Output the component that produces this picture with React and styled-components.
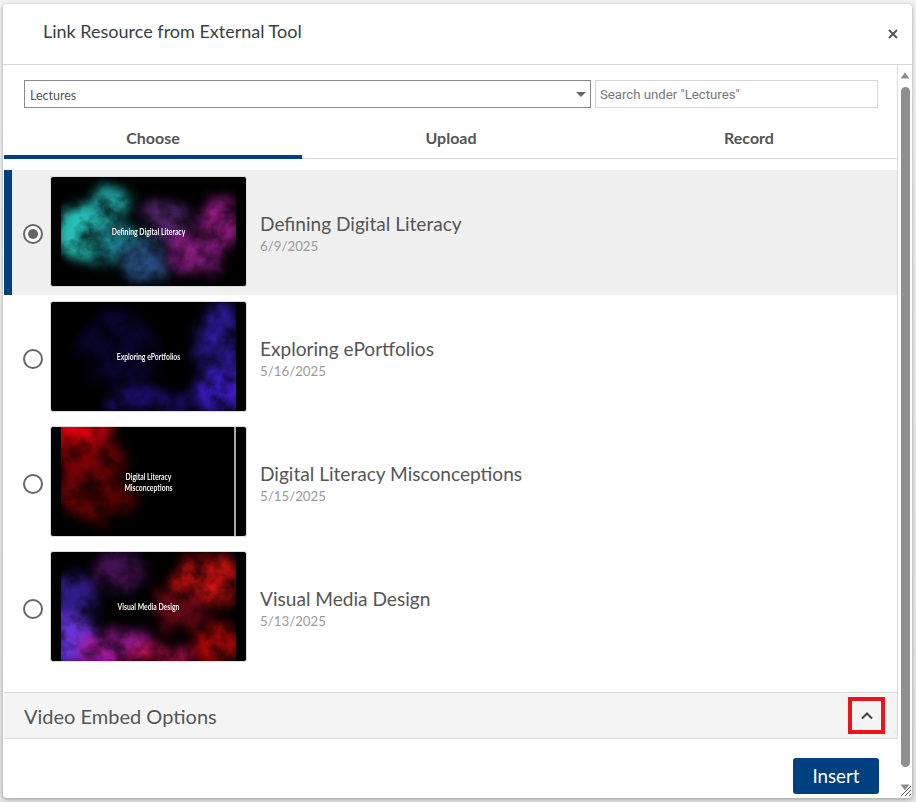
import React from "react";
import styled, { createGlobalStyle } from "styled-components";

const GlobalStyle = createGlobalStyle`
  html, body { margin: 0; padding: 0; height: 100%; background: #e9e9e9; }
  * { box-sizing: border-box; }
`;

const lectures = [
  {
    title: "Defining Digital Literacy",
    date: "6/9/2025",
    caption: ["Defining Digital Literacy"],
    smoke: [
      [24, 56, 30, 28, "#2fe0d6"],
      [48, 28, 22, 16, "#25b8b8"],
      [56, 70, 26, 24, "#1f98a8"],
      [82, 88, 26, 24, "#2f5a96"],
      [105, 45, 24, 24, "#5a2a78"],
      [160, 46, 22, 26, "#b0209e"],
      [137, 78, 26, 22, "#a02298"],
    ],
  },
  {
    title: "Exploring ePortfolios",
    date: "5/16/2025",
    caption: ["Exploring ePortfolios"],
    smoke: [
      [170, 86, 34, 30, "#4a20f0"],
      [158, 36, 24, 36, "#3420b8"],
      [92, 100, 46, 14, "#26128f"],
      [60, 50, 40, 40, "#0c0638"],
    ],
  },
  {
    title: "Digital Literacy Misconceptions",
    date: "5/15/2025",
    caption: ["Digital Literacy", "Misconceptions"],
    line: true,
    smoke: [
      [20, 2, 36, 22, "#ff0010"],
      [32, 36, 34, 20, "#8c0308"],
      [34, 72, 44, 22, "#6e0406"],
    ],
  },
  {
    title: "Visual Media Design",
    date: "5/13/2025",
    caption: ["Visual Media Design"],
    smoke: [
      [4, 84, 30, 28, "#7a3cff"],
      [14, 42, 24, 22, "#3a20a0"],
      [58, 98, 38, 20, "#c020b8"],
      [98, 106, 38, 14, "#e01460"],
      [60, 20, 26, 22, "#4e1460"],
      [146, 30, 38, 26, "#f01414"],
      [118, 58, 32, 20, "#720818"],
      [160, 94, 24, 20, "#d00a0a"],
    ],
  },
];

const Smoke = ({ id, blobs }) => (
  <SmokeSvg viewBox="0 0 176 110" preserveAspectRatio="none">
    <defs>
      <filter id={id} x="-30%" y="-30%" width="160%" height="160%" colorInterpolationFilters="sRGB">
        <feTurbulence type="fractalNoise" baseFrequency="0.04" numOctaves="5" seed="7" result="noise" />
        <feDisplacementMap in="SourceGraphic" in2="noise" scale="30" xChannelSelector="R" yChannelSelector="G" result="warped" />
        <feGaussianBlur in="warped" stdDeviation="6" result="soft" />
        <feColorMatrix in="noise" type="matrix" values="0 0 0 0 0  0 0 0 0 0  0 0 0 0 0  1.7 0 0 0 -0.1" result="wisps" />
        <feComposite in="soft" in2="wisps" operator="in" />
      </filter>
    </defs>
    <g filter={`url(#${id})`} opacity="0.85">
      {blobs.map(([cx, cy, rx, ry, fill], i) => (
        <ellipse key={i} cx={cx} cy={cy} rx={rx} ry={ry} fill={fill} />
      ))}
    </g>
  </SmokeSvg>
);

const App = () => {
  return (
    <>
      <GlobalStyle />
      <Page>
        <Dialog>
          <Header>
            <Title>Link Resource from External Tool</Title>
            <CloseButton aria-label="Close">
              <svg width="10" height="10" viewBox="0 0 10 10">
                <path d="M1 1l8 8M9 1l-8 8" stroke="#555" strokeWidth="2" fill="none" />
              </svg>
            </CloseButton>
          </Header>
          <Body>
            <Main>
              <Panel>
                <Filters>
                  <SelectBox>
                    <span>Lectures</span>
                    <Caret />
                  </SelectBox>
                  <SearchBox placeholder={'Search under "Lectures"'} />
                </Filters>
                <Tabs>
                  <Tab $active>Choose</Tab>
                  <Tab>Upload</Tab>
                  <Tab>Record</Tab>
                </Tabs>
                <List>
                  {lectures.map((item, i) => (
                    <Row key={item.title} $selected={i === 0}>
                      <Radio $checked={i === 0} />
                      <Thumb>
                        <Art>
                          <Smoke id={`smoke-${i}`} blobs={item.smoke} />
                          {item.line && <ThumbLine />}
                        </Art>
                        <Caption>
                          {item.caption.map((text) => (
                            <div key={text}>{text}</div>
                          ))}
                        </Caption>
                      </Thumb>
                      <Info>
                        <RowTitle>{item.title}</RowTitle>
                        <RowDate>{item.date}</RowDate>
                      </Info>
                    </Row>
                  ))}
                </List>
                <Options>
                  <OptionsLabel>Video Embed Options</OptionsLabel>
                  <Toggle aria-label="Collapse">
                    <svg width="14" height="9" viewBox="0 0 14 9">
                      <path d="M2 7.5l5-5 5 5" stroke="#444" strokeWidth="2" fill="none" />
                    </svg>
                  </Toggle>
                </Options>
              </Panel>
              <Footer>
                <InsertButton>Insert</InsertButton>
              </Footer>
            </Main>
            <Scrollbar>
              <svg width="10" height="7" viewBox="0 0 10 7">
                <path d="M5 0.5L9.5 6.5H0.5z" fill="#8f8f8f" />
              </svg>
              <ScrollThumb />
              <DownArrow width="10" height="7" viewBox="0 0 10 7">
                <path d="M5 6.5L9.5 0.5H0.5z" fill="#8f8f8f" />
              </DownArrow>
              <Grip width="12" height="12" viewBox="0 0 12 12">
                <path d="M1 11L11 1M5 11l6-6M9 11l2-2" stroke="#555" strokeWidth="1" fill="none" />
              </Grip>
            </Scrollbar>
          </Body>
        </Dialog>
      </Page>
    </>
  );
};

const Page = styled.div`
  width: 916px;
  height: 802px;
  padding: 4px 4px 4px 3px;
  background: linear-gradient(#f3f3f3, #e4e4e4);
  overflow: hidden;
`;

const Dialog = styled.div`
  height: 794px;
  display: flex;
  flex-direction: column;
  background: #fff;
  border-radius: 4px;
  box-shadow: 0 1px 4px rgba(0, 0, 0, 0.35);
`;

const Header = styled.div`
  height: 61px;
  flex: none;
  display: flex;
  justify-content: space-between;
  padding: 16px 14px 0 40px;
  border-bottom: 1px solid #d6d6d6;
`;

const Title = styled.div`
  font: 400 18px/22px Lato, "Liberation Sans", sans-serif;
  color: #333f48;
`;

const CloseButton = styled.button`
  width: 10px;
  height: 10px;
  margin-top: 9px;
  padding: 0;
  border: none;
  background: none;
  display: flex;
`;

const Body = styled.div`
  flex: 1;
  display: flex;
  min-height: 0;
`;

const Main = styled.div`
  width: 895px;
  display: flex;
  flex-direction: column;
`;

const Panel = styled.div`
  height: 674px;
  margin-left: 1px;
  border-right: 1px solid #d9d9d9;
  border-bottom: 1px solid #d9d9d9;
  display: flex;
  flex-direction: column;
`;

const Filters = styled.div`
  display: flex;
  gap: 4px;
  padding: 15px 18px 0 20px;
`;

const SelectBox = styled.div`
  width: 567px;
  height: 28px;
  flex: none;
  border: 1px solid #8a8a8a;
  display: flex;
  align-items: center;
  justify-content: space-between;
  padding: 2px 4px 0 5px;
  font: 400 12.5px Lato, "Liberation Sans", sans-serif;
  color: #555;
`;

const Caret = styled.span`
  width: 0;
  height: 0;
  margin-top: -2px;
  border-left: 5px solid transparent;
  border-right: 5px solid transparent;
  border-top: 5px solid #666;
`;

const SearchBox = styled.input`
  width: 283px;
  height: 28px;
  flex: none;
  border: 1px solid #d6d6d6;
  padding: 0 4px;
  outline: none;
  font: 400 13.2px Roboto, "Liberation Sans", sans-serif;
  &::placeholder {
    color: #777;
    opacity: 1;
  }
`;

const Tabs = styled.div`
  height: 50px;
  margin-top: 1px;
  display: grid;
  grid-template-columns: repeat(3, 298px);
  border-bottom: 1px solid #d9d9d9;
`;

const Tab = styled.div`
  height: 50px;
  padding-top: 19px;
  text-align: center;
  font: 700 16px/20px Lato, "Liberation Sans", sans-serif;
  color: #555;
  border-bottom: ${(props) => (props.$active ? "4px solid #003f80" : "none")};
`;

const List = styled.div`
  flex: 1;
  padding-top: 11px;
`;

const Row = styled.div`
  height: 125px;
  display: flex;
  align-items: center;
  padding-left: ${(props) => (props.$selected ? "11px" : "19px")};
  background: ${(props) => (props.$selected ? "#efefef" : "transparent")};
  border-left: ${(props) => (props.$selected ? "8px solid #003f80" : "none")};
`;

const Radio = styled.span`
  position: relative;
  width: 20px;
  height: 20px;
  flex: none;
  margin-top: 2px;
  border: 2px solid #666;
  border-radius: 50%;
  background: #fff;
  &::after {
    content: "";
    display: ${(props) => (props.$checked ? "block" : "none")};
    position: absolute;
    inset: 3px;
    border-radius: 50%;
    background: #666;
  }
`;

const Thumb = styled.div`
  position: relative;
  width: 197px;
  height: 111px;
  flex: none;
  margin: -2px 13px 0 7px;
  padding: 0 10px;
  background: #000;
  border: 1px solid #dcdcdc;
  border-radius: 3px;
  overflow: hidden;
`;

const Art = styled.div`
  position: relative;
  height: 100%;
  overflow: hidden;
`;

const SmokeSvg = styled.svg`
  display: block;
  width: 100%;
  height: 100%;
`;

const ThumbLine = styled.span`
  position: absolute;
  top: 0;
  right: 0;
  bottom: 0;
  width: 2px;
  background: #a8a8a8;
`;

const Caption = styled.div`
  position: absolute;
  inset: 0;
  display: flex;
  flex-direction: column;
  align-items: center;
  justify-content: center;
  font: 700 9.5px/11px Lato, sans-serif;
  color: #f4f4f4;
  transform: scaleX(0.72);
`;

const Info = styled.div`
  display: flex;
  flex-direction: column;
  padding-top: 2px;
`;

const RowTitle = styled.div`
  font: 400 19.1px/24px Lato, "Liberation Sans", sans-serif;
  color: #555;
`;

const RowDate = styled.div`
  margin-top: 1px;
  font: 400 13.3px/18px Lato, "Liberation Sans", sans-serif;
  color: #999;
`;

const Options = styled.div`
  height: 46px;
  flex: none;
  display: flex;
  align-items: center;
  justify-content: space-between;
  padding: 0 12px 0 20px;
  background: #f4f4f4;
  border-top: 1px solid #d9d9d9;
`;

const OptionsLabel = styled.div`
  font: 400 20px Lato, "Liberation Sans", sans-serif;
  color: #555;
`;

const Toggle = styled.button`
  width: 37px;
  height: 37px;
  padding: 0;
  border: 4px solid #e9151b;
  background: none;
  display: flex;
  align-items: center;
  justify-content: center;
`;

const Footer = styled.div`
  flex: 1;
  display: flex;
  align-items: flex-start;
  justify-content: flex-end;
  padding: 19px 19px 0 0;
`;

const InsertButton = styled.button`
  width: 86px;
  height: 36px;
  padding: 0 0 2px;
  border: none;
  border-radius: 3px;
  background: #003f80;
  color: #fff;
  font: 400 18.8px Lato, "Liberation Sans", sans-serif;
`;

const Scrollbar = styled.div`
  position: relative;
  flex: 1;
  display: flex;
  flex-direction: column;
  align-items: center;
  gap: 8px;
  padding: 7px 0 0;
`;

const ScrollThumb = styled.div`
  width: 9px;
  height: 680px;
  border-radius: 5px;
  background: #8f8f8f;
`;

const DownArrow = styled.svg`
  margin-top: 9px;
`;

const Grip = styled.svg`
  position: absolute;
  right: 0;
  bottom: 1px;
`;

export default App;
